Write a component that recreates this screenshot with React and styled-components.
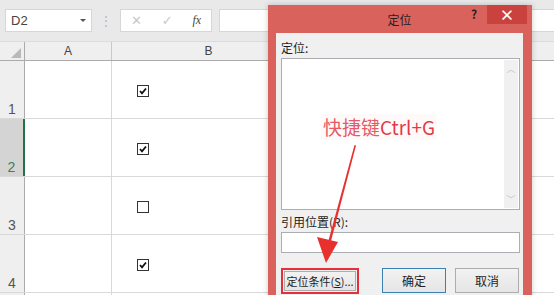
import React from 'react';
import styled, { createGlobalStyle } from 'styled-components';

const GlobalStyle = createGlobalStyle`
  html, body {
    margin: 0;
    padding: 0;
    overflow: hidden;
    background: #ffffff;
  }
  body {
    font-family: "Liberation Sans", "Noto Sans CJK SC", sans-serif;
  }
`;

const Screen = styled.div`
  position: relative;
  width: 554px;
  height: 295px;
  overflow: hidden;
  background: #ffffff;
`;

/* ---------- formula bar ---------- */

const FormulaBar = styled.div`
  display: flex;
  align-items: center;
  height: 42px;
  padding: 0 0 0 5px;
  box-sizing: border-box;
  background: #e9e9e9;
  border-bottom: 1px solid #dcdcdc;
`;

const NameBox = styled.div`
  display: flex;
  align-items: center;
  justify-content: space-between;
  width: 87px;
  height: 23px;
  box-sizing: border-box;
  padding: 0 5px 0 5px;
  background: #ffffff;
  border: 1px solid #d6d6d6;
  font-size: 13px;
  color: #444;
`;

const DropTriangle = styled.span`
  width: 0;
  height: 0;
  border-left: 3px solid transparent;
  border-right: 3px solid transparent;
  border-top: 3px solid #555;
`;

const Grip = styled.div`
  width: 28px;
  text-align: center;
  color: #b5b5b5;
  font-size: 12px;
  line-height: 1;
`;

const FxBox = styled.div`
  display: flex;
  align-items: center;
  justify-content: space-around;
  width: 92px;
  height: 23px;
  box-sizing: border-box;
  background: #ffffff;
  border: 1px solid #d6d6d6;
  margin-right: 7px;
`;

const FxGlyph = styled.span`
  font-family: ${p => (p.$muted ? '"DejaVu Sans", sans-serif' : '"Liberation Serif", serif')};
  font-style: ${p => (p.$muted ? 'normal' : 'italic')};
  font-size: ${p => (p.$muted ? 13 : 12)}px;
  color: ${p => (p.$muted ? '#c8c8c8' : '#444')};
`;

const FormulaInput = styled.div`
  flex: 1;
  height: 23px;
  background: #ffffff;
  border-top: 1px solid #d6d6d6;
  border-bottom: 1px solid #d6d6d6;
  border-left: 1px solid #d6d6d6;
  box-sizing: border-box;
`;

/* ---------- sheet ---------- */

const HeaderRow = styled.div`
  display: flex;
  height: 18px;
  background: #efefef;
  border-bottom: 1px solid #ababab;
`;

const Corner = styled.div`
  width: 25px;
  box-sizing: border-box;
  border-right: 1px solid #ababab;
  display: flex;
  align-items: flex-end;
  justify-content: flex-end;
  padding: 0 3px 2px 0;
`;

const CornerTriangle = styled.span`
  width: 0;
  height: 0;
  border-left: 10px solid transparent;
  border-bottom: 10px solid #b9b9b9;
`;

const ColHeader = styled.div`
  width: ${p => p.$w}px;
  flex-shrink: 0;
  box-sizing: border-box;
  border-right: 1px solid #c9c9c9;
  text-align: center;
  font-size: 12px;
  line-height: 18px;
  color: #444;
`;

const Row = styled.div`
  display: flex;
  height: 58px;
  box-sizing: border-box;
  border-bottom: 1px solid #d9d9d9;
`;

const RowHeader = styled.div`
  width: 25px;
  flex-shrink: 0;
  box-sizing: border-box;
  display: flex;
  align-items: flex-end;
  justify-content: center;
  padding-bottom: 1px;
  font-size: 14px;
  background: ${p => (p.$active ? '#d4d4d4' : '#efefef')};
  color: ${p => (p.$active ? '#3f7d5c' : '#555')};
  border-right: ${p => (p.$active ? '2px solid #217346' : '1px solid #ababab')};
`;

const Cell = styled.div`
  width: ${p => p.$w}px;
  flex-shrink: 0;
  box-sizing: border-box;
  border-right: 1px solid #d9d9d9;
  padding: 22px 0 0 25px;
`;

const FillCell = styled.div`
  flex: 1;
`;

const CheckBox = ({ checked }) => (
  <svg width="12" height="12" viewBox="0 0 12 12">
    <rect x="0.5" y="0.5" width="11" height="11" fill="#fff" stroke="#333" />
    {checked && (
      <path d="M3 6 L5 8.3 L9 3.5" fill="none" stroke="#111" strokeWidth="1.8" />
    )}
  </svg>
);

/* ---------- dialog ---------- */

const Dialog = styled.div`
  position: absolute;
  left: 268px;
  top: 5px;
  width: 264px;
  height: 300px;
  background: #d9625d;
  display: flex;
  flex-direction: column;
  padding: 0 9px 0 8px;
  box-sizing: border-box;
  box-shadow: 0 0 6px rgba(0, 0, 0, 0.2);
`;

const TitleBar = styled.div`
  position: relative;
  height: 28px;
  display: flex;
  align-items: center;
  justify-content: center;
  font-family: "Noto Sans CJK SC", sans-serif;
  font-size: 12px;
  color: #2a2020;
`;

const TitleButtons = styled.div`
  position: absolute;
  right: -4px;
  top: 0;
  display: flex;
  align-items: stretch;
  height: 19px;
`;

const HelpBtn = styled.div`
  width: 26px;
  text-align: center;
  font-weight: bold;
  font-size: 12px;
  line-height: 17px;
  color: #2a2020;
`;

const CloseBtn = styled.div`
  width: 40px;
  background: #c9423e;
  color: #ffffff;
  font-size: 15px;
  font-weight: bold;
  text-align: center;
  line-height: 19px;
`;

const Panel = styled.div`
  flex: 1;
  background: #f0f0f0;
  padding: 7px 3px 0 5px;
  display: flex;
  flex-direction: column;
  font-family: "Noto Sans CJK SC", sans-serif;
  font-size: 12px;
  color: #1e1e1e;
`;

const Label = styled.div`
  height: 16px;
  line-height: 16px;
  margin-top: ${p => p.$mt || 0}px;
`;

const ListBox = styled.div`
  margin-top: 2px;
  height: 152px;
  box-sizing: border-box;
  border: 1px solid #abadb3;
  background: #ffffff;
  display: flex;
  justify-content: flex-end;
`;

const ScrollBar = styled.div`
  width: 14px;
  margin: 1px 1px 1px 0;
  background: #f0f0f0;
  display: flex;
  flex-direction: column;
  justify-content: space-between;
  align-items: center;
  color: #c3c3c3;
  font-size: 9px;
  padding: 2px 0;
`;

const TextInput = styled.div`
  margin-top: 2px;
  height: 21px;
  box-sizing: border-box;
  border: 1px solid #abadb3;
  background: #ffffff;
`;

const ButtonRow = styled.div`
  margin-top: 15px;
  display: flex;
  align-items: flex-start;
`;

const Highlight = styled.div`
  width: 78px;
  height: 26px;
  box-sizing: border-box;
  border: 2px solid #e3313c;
  padding: 1px;
  margin-right: 23px;
`;

const Button = styled.div`
  width: ${p => p.$w}px;
  height: ${p => p.$h || 25}px;
  box-sizing: border-box;
  border: 1px solid ${p => (p.$primary ? '#3c7fb1' : '#adadad')};
  background: linear-gradient(#f2f2f2, #e5e5e5);
  display: flex;
  align-items: center;
  justify-content: center;
  margin-right: ${p => p.$mr || 0}px;
  font-size: ${p => p.$fs || 12}px;
  white-space: nowrap;
  color: #1e1e1e;
  u {
    text-decoration: underline;
  }
`;

/* ---------- annotation overlay ---------- */

const Callout = styled.div`
  position: absolute;
  left: 321px;
  top: 114px;
  padding: 0 2px;
  background: #fffafa;
  font-family: "Noto Sans CJK SC", sans-serif;
  font-size: 19px;
  line-height: 26px;
  color: #e55a67;
  span {
    color: #e33a4a;
  }
`;

const ArrowLayer = styled.svg`
  position: absolute;
  left: 0;
  top: 0;
  pointer-events: none;
`;

const App = () => (
  <Screen>
    <GlobalStyle />
    <FormulaBar>
      <NameBox>
        D2
        <DropTriangle />
      </NameBox>
      <Grip>⋮</Grip>
      <FxBox>
        <FxGlyph $muted>✕</FxGlyph>
        <FxGlyph $muted>✓</FxGlyph>
        <FxGlyph>fx</FxGlyph>
      </FxBox>
      <FormulaInput />
    </FormulaBar>

    <HeaderRow>
      <Corner>
        <CornerTriangle />
      </Corner>
      <ColHeader $w={87}>A</ColHeader>
      <ColHeader $w={194}>B</ColHeader>
      <FillCell />
    </HeaderRow>

    {[true, true, false, true].map((checked, i) => (
      <Row key={i}>
        <RowHeader $active={i === 1}>{i + 1}</RowHeader>
        <Cell $w={87} />
        <Cell $w={194}>
          <CheckBox checked={checked} />
        </Cell>
        <FillCell />
      </Row>
    ))}
    <Row>
      <RowHeader />
      <Cell $w={87} />
      <Cell $w={194} />
      <FillCell />
    </Row>

    <Dialog>
      <TitleBar>
        定位
        <TitleButtons>
          <HelpBtn>?</HelpBtn>
          <CloseBtn>×</CloseBtn>
        </TitleButtons>
      </TitleBar>
      <Panel>
        <Label>定位:</Label>
        <ListBox>
          <ScrollBar>
            <span>︿</span>
            <span>﹀</span>
          </ScrollBar>
        </ListBox>
        <Label $mt={4}>引用位置(R):</Label>
        <TextInput />
        <ButtonRow>
          <Highlight>
            <Button $w={72} $h={20} $fs={11}>
              定位条件(<u>S</u>)...
            </Button>
          </Highlight>
          <Button $w={64} $primary $mr={9}>确定</Button>
          <Button $w={64}>取消</Button>
        </ButtonRow>
      </Panel>
    </Dialog>

    <Callout>
      快捷键<span>Ctrl+G</span>
    </Callout>

    <ArrowLayer width="554" height="295" viewBox="0 0 554 295">
      <polygon points="354.5,145 356,145.5 331,241 328.5,240.5" fill="#e8302e" />
      <polygon points="326,263 317,237 338,242" fill="#e8302e" />
    </ArrowLayer>
  </Screen>
);

export default App;
